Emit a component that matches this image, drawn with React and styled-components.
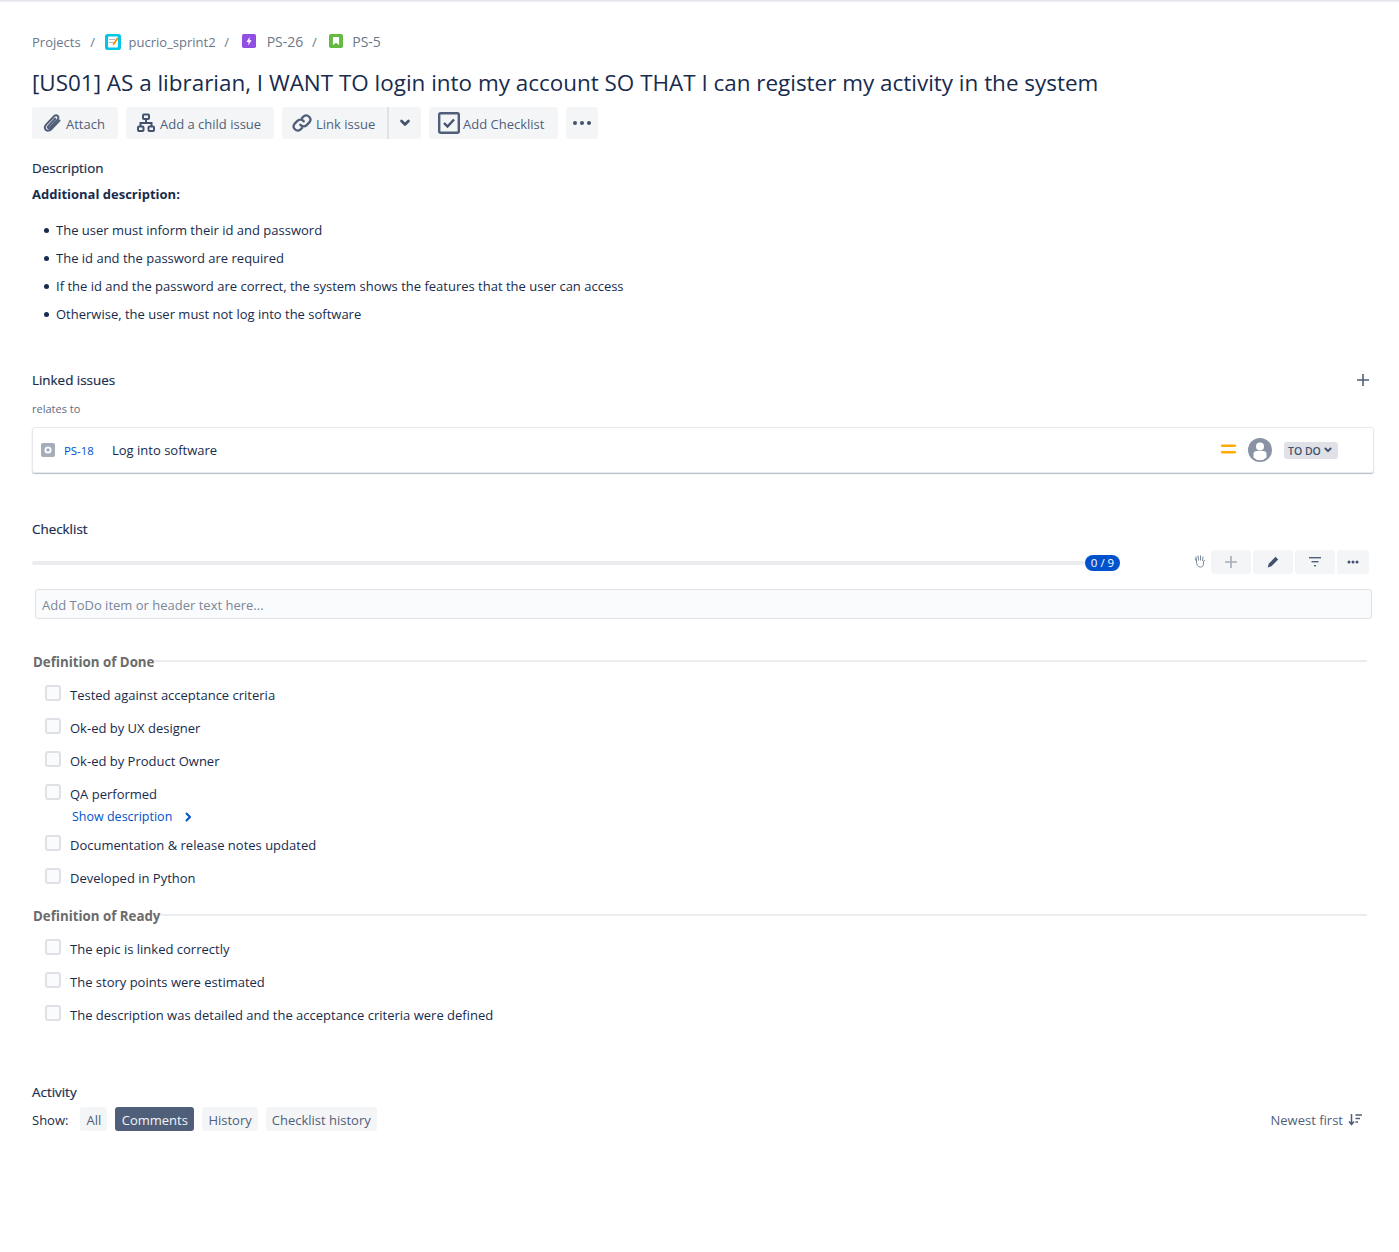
import React from "react";
import styled, { createGlobalStyle } from "styled-components";

const GlobalStyle = createGlobalStyle`
  html, body {
    margin: 0;
    padding: 0;
    background: #fff;
    color: #172b4d;
    font-family: "Open Sans", "Noto Sans", sans-serif;
    font-size: 13px;
  }
`;

const Page = styled.div`
  min-height: 1252px;
  box-sizing: border-box;
  padding: 31px 25px 0 32px;
  border-top: 1px solid #e4e6ec;
  box-shadow: inset 0 1px 1px #eef0f4;
`;

const Breadcrumbs = styled.nav`
  display: flex;
  align-items: center;
  height: 20px;
  color: #6b778c;
`;

const Crumb = styled.span`
  display: flex;
  align-items: center;
  gap: ${(p) => p.$gap || 8}px;
  padding-bottom: ${(p) => (p.$size ? 2 : 0)}px;
  font-size: ${(p) => p.$size || 13}px;
`;

const Slash = styled.span`
  width: 24px;
  text-align: center;
  margin: ${(p) => p.$margin || "0"};
`;

const Title = styled.h1`
  margin: 14px 0 0;
  height: 34px;
  line-height: 34px;
  font-size: 22.45px;
  font-weight: 400;
  color: #172b4d;
  white-space: nowrap;
`;

const Toolbar = styled.div`
  display: flex;
  gap: 8px;
  margin-top: 7px;
`;

const ToolButton = styled.button`
  display: flex;
  align-items: center;
  gap: ${(p) => p.$gap || 4}px;
  box-sizing: border-box;
  width: ${(p) => p.$width}px;
  height: 32px;
  padding: 0 0 0 ${(p) => p.$left || 10}px;
  border: 0;
  border-radius: 3px;
  background: #f4f5f7;
  color: #505f79;
  font: inherit;
`;

const ButtonLabel = styled.span`
  margin-top: 2px;
  white-space: nowrap;
`;

const SplitButton = styled.div`
  display: flex;
  height: 32px;
`;

const SplitMain = styled(ToolButton)`
  border-radius: 3px 0 0 3px;
  border-right: 2px solid #dfe1e6;
`;

const SplitCaret = styled(ToolButton)`
  border-radius: 0 3px 3px 0;
  padding: 0;
  justify-content: center;
`;

const SectionTitle = styled.h2`
  margin: ${(p) => p.$margin || "0"};
  height: 20px;
  line-height: 20px;
  font-size: 13.4px;
  font-weight: 500;
  -webkit-text-stroke: 0.2px #172b4d;
  color: #172b4d;
`;

const Strong = styled.p`
  margin: 6px 0 0;
  height: 20px;
  line-height: 20px;
  font-weight: 700;
`;

const Bullets = styled.ul`
  margin: 12px 0 0;
  padding: 0 0 0 12px;
  list-style: none;
  li {
    display: flex;
    align-items: center;
    height: 28px;
    line-height: 28px;
  }
  li::before {
    content: "";
    width: 5px;
    height: 5px;
    margin-right: 7px;
    border-radius: 50%;
    background: #172b4d;
  }
`;

const LinkedHead = styled.div`
  display: flex;
  justify-content: space-between;
  align-items: center;
  margin-top: 42px;
  padding-right: 5px;
`;

const SmallLabel = styled.div`
  margin-top: 11px;
  height: 16px;
  line-height: 16px;
  font-size: 11px;
  font-weight: 500;
  color: #5e6c84;
`;

const IssueCard = styled.div`
  display: flex;
  align-items: center;
  height: 46px;
  box-sizing: border-box;
  margin: 10px 0 0 0;
  padding: 0 35px 0 8px;
  border: 1px solid #e7e9ee;
  border-radius: 3px;
  box-shadow: 0 1px 1px rgba(9, 30, 66, 0.3);
`;

const IssueKey = styled.span`
  margin-left: 9px;
  width: 48px;
  font-size: 11.400px;
  color: #0052cc;
`;

const IssueSummary = styled.span`
  flex: 1;
`;

const Avatar = styled.svg`
  margin: 0 12px 0 11px;
`;

const StatusPill = styled.span`
  display: flex;
  align-items: center;
  gap: 1px;
  height: 17px;
  width: 54px;
  box-sizing: border-box;
  padding-left: 4px;
  border-radius: 3px;
  background: #dfe1e6;
  color: #42526e;
  font-size: 10.500px;
  font-weight: 600;
  white-space: nowrap;
`;

const PillLabel = styled.span`
  margin-top: 1px;
`;

const ProgressRow = styled.div`
  display: flex;
  align-items: center;
  height: 24px;
  margin-top: 11px;
  padding-right: 5px;
`;

const Track = styled.div`
  flex: 1;
  height: 4px;
  margin-top: 1px;
  background: #ebecf0;
  border-radius: 2px;
`;

const Count = styled.span`
  width: 35px;
  height: 16px;
  line-height: 16px;
  border-radius: 8px;
  background: #0052cc;
  color: #fff;
  font-size: 11.500px;
  text-align: center;
  margin-top: 2px;
`;

const Tools = styled.div`
  display: flex;
  align-items: center;
  gap: 2px;
  margin-left: 73px;
`;

const HandIcon = styled.svg`
  margin: -3px 2px 0 0;
`;

const SmallTool = styled.span`
  display: flex;
  align-items: center;
  justify-content: center;
  width: ${(p) => p.$width || 40}px;
  height: 24px;
  border-radius: 3px;
  background: #f4f5f7;
`;

const TodoInput = styled.input`
  display: block;
  box-sizing: border-box;
  width: 1337px;
  height: 30px;
  margin: 15px 0 0 3px;
  padding: 2px 6px 0;
  border: 1px solid #dfe1e6;
  border-radius: 3px;
  background: #fafbfc;
  font: inherit;
  &::placeholder {
    color: #7a869a;
    opacity: 1;
  }
`;

const GroupHeader = styled.div`
  display: flex;
  height: 20px;
  margin: ${(p) => p.$margin} 7px 0 1px;
  color: #6b6b6b;
  font-size: 13.300px;
  font-weight: 700;
  line-height: 20px;
  &::after {
    content: "";
    flex: 1;
    height: 2px;
    margin-top: 8px;
    background: #ebecf0;
  }
`;

const CheckList = styled.div`
  margin-top: 7px;
`;

const CheckRow = styled.label`
  display: flex;
  height: 33px;
  padding-left: 13px;
  line-height: 20px;
  gap: 9px;
  padding-top: 6px;
  box-sizing: border-box;
`;

const Box = styled.span`
  width: 12px;
  height: 12px;
  border: 2px solid #dfe1e6;
  border-radius: 3px;
  background: #fafbfc;
`;

const ShowDescription = styled.div`
  display: flex;
  align-items: center;
  gap: 12px;
  height: 18px;
  margin: -3px 0 0 40px;
  padding-bottom: 3px;
  color: #0052cc;
  font-size: 12.500px;
  line-height: 18px;
`;

const ActivityRow = styled.div`
  display: flex;
  align-items: center;
  height: 24px;
  margin-top: 5px;
  padding-right: 12px;
`;

const ShowLabel = styled.span`
  margin: 2px 12px 0 0;
`;

const Chip = styled.button`
  height: 24px;
  padding: 2px ${(p) => (p.$active ? 6.5 : 6)}px 0;
  margin-right: 8px;
  border: 0;
  border-radius: 3px;
  background: ${(p) => (p.$active ? "#505f79" : "#f4f5f7")};
  color: ${(p) => (p.$active ? "#f4f5f7" : "#505f79")};
  font: inherit;
`;

const Sort = styled.span`
  display: flex;
  align-items: center;
  gap: 5px;
  margin-left: auto;
  padding-top: 2px;
  color: #505f79;
`;

const ProjectIcon = () => (
  <svg width="16" height="16" viewBox="0 0 16 16">
    <rect width="16" height="16" rx="2.500" fill="#00c7e6" />
    <rect x="3" y="2.500" width="10" height="11" rx="1" fill="#fff" />
    <rect x="4" y="5" width="6" height="1" fill="#b3bac5" />
    <rect x="4" y="8" width="5" height="1" fill="#b3bac5" />
    <path d="M12 3.500l1.500 1-4 6-1.800.8.200-1.900z" fill="#ff8b00" />
  </svg>
);

const EpicIcon = () => (
  <svg width="14" height="14" viewBox="0 0 16 16">
    <rect width="16" height="16" rx="2" fill="#904ee2" />
    <path d="M9 3L5 9h2.600L7 13l4-6H8.400z" fill="#fff" />
  </svg>
);

const StoryIcon = () => (
  <svg width="14" height="14" viewBox="0 0 16 16">
    <rect width="16" height="16" rx="2" fill="#65ba43" />
    <path d="M5 3.500h6a.5.5 0 0 1 .5.5v8.500L8 10l-3.500 2.500V4a.5.5 0 0 1 .5-.5z" fill="#fff" />
  </svg>
);

const PaperclipIcon = () => (
  <svg width="20" height="20" viewBox="0 0 20 20" fill="none" stroke="#505f79" strokeWidth="2" strokeLinecap="round">
    <path d="M17.500 7.500l-8.300 8.700c-1.700 1.700-4 1.900-5.400.5s-1.100-3.600.5-5.300l7.800-8.200c1.100-1.100 2.600-1.200 3.600-.2s.9 2.500-.2 3.600l-7.700 8.100c-.5.500-1.200.6-1.700.1s-.3-1.200.2-1.700l6.900-7.300" />
  </svg>
);

const HierarchyIcon = () => (
  <svg width="20" height="20" viewBox="0 0 20 20" fill="none" stroke="#42526e" strokeWidth="2">
    <rect x="7" y="1.500" width="6" height="4.500" rx="1" />
    <rect x="2" y="13.500" width="5.500" height="4.500" rx="1" />
    <rect x="12.500" y="13.500" width="5.500" height="4.500" rx="1" />
    <path d="M10 6v4M4.500 13.500V10h11v3.500" />
  </svg>
);

const LinkIcon = () => (
  <svg width="20" height="20" viewBox="0 0 24 24" fill="none" stroke="#505f79" strokeWidth="2.800" strokeLinecap="round">
    <path d="M10 14a5 5 0 0 0 7.500.5l3.500-3.500a5 5 0 0 0-7-7l-2 2" />
    <path d="M14 10a5 5 0 0 0-7.500-.5L3 13a5 5 0 0 0 7 7l2-2" />
  </svg>
);

const ChevronDown = ({ size = 16, color = "#42526e" }) => (
  <svg width={size} height={size} viewBox="0 0 16 16" fill="none" stroke={color} strokeWidth="2.600" strokeLinecap="round" strokeLinejoin="round">
    <path d="M4.500 6l3.500 3.500L11.500 6" />
  </svg>
);

const CheckIcon = () => (
  <svg width="22" height="22" viewBox="0 0 22 22" fill="none">
    <rect x="1.200" y="1.200" width="19.600" height="19.600" rx="1.500" stroke="#505f79" strokeWidth="2.400" />
    <path d="M6 11l3.500 3.500L16 7.500" stroke="#42526e" strokeWidth="2.400" />
  </svg>
);

const Dots = ({ r = 2, gap = 7, color = "#42526e", width = 20 }) => (
  <svg width={width} height="8" viewBox={`0 0 ${width} 8`} fill={color}>
    <circle cx={width / 2 - gap} cy="4" r={r} />
    <circle cx={width / 2} cy="4" r={r} />
    <circle cx={width / 2 + gap} cy="4" r={r} />
  </svg>
);

const Plus = ({ color = "#505f79", size = 12 }) => (
  <svg width={size} height={size} viewBox="0 0 12 12" stroke={color} strokeWidth="1.600">
    <path d="M6 0v12M0 6h12" />
  </svg>
);

const App = () => {
  const done = [
    "Tested against acceptance criteria",
    "Ok-ed by UX designer",
    "Ok-ed by Product Owner",
    "QA performed",
  ];
  const doneRest = ["Documentation & release notes updated", "Developed in Python"];
  const ready = [
    "The epic is linked correctly",
    "The story points were estimated",
    "The description was detailed and the acceptance criteria were defined",
  ];

  return (
    <Page>
      <GlobalStyle />
      <Breadcrumbs>
        <Crumb>Projects</Crumb>
        <Slash>/</Slash>
        <Crumb>
          <ProjectIcon />
          pucrio_sprint2
        </Crumb>
        <Slash $margin="0 3px 0 -1px">/</Slash>
        <Crumb $gap={11} $size={14}>
          <EpicIcon />
          PS-26
        </Crumb>
        <Slash $margin="0 3px 0 -1px">/</Slash>
        <Crumb $gap={9} $size={14}>
          <StoryIcon />
          PS-5
        </Crumb>
      </Breadcrumbs>

      <Title>[US01] AS a librarian, I WANT TO login into my account SO THAT I can register my activity in the system</Title>

      <Toolbar>
        <ToolButton $width={86}>
          <PaperclipIcon />
          <ButtonLabel>Attach</ButtonLabel>
        </ToolButton>
        <ToolButton $width={148}>
          <HierarchyIcon />
          <ButtonLabel>Add a child issue</ButtonLabel>
        </ToolButton>
        <SplitButton>
          <SplitMain $width={107}>
            <LinkIcon />
            <ButtonLabel>Link issue</ButtonLabel>
          </SplitMain>
          <SplitCaret $width={32}>
            <ChevronDown />
          </SplitCaret>
        </SplitButton>
        <ToolButton $width={129} $gap={3} $left={9}>
          <CheckIcon />
          <ButtonLabel>Add Checklist</ButtonLabel>
        </ToolButton>
        <ToolButton $width={32} $left={6}>
          <Dots />
        </ToolButton>
      </Toolbar>

      <SectionTitle $margin="19px 0 0">Description</SectionTitle>
      <Strong>Additional description:</Strong>
      <Bullets>
        <li>The user must inform their id and password</li>
        <li>The id and the password are required</li>
        <li>If the id and the password are correct, the system shows the features that the user can access</li>
        <li>Otherwise, the user must not log into the software</li>
      </Bullets>

      <LinkedHead>
        <SectionTitle>Linked issues</SectionTitle>
        <Plus />
      </LinkedHead>
      <SmallLabel>relates to</SmallLabel>
      <IssueCard>
        <svg width="14" height="14" viewBox="0 0 14 14">
          <rect width="14" height="14" rx="2" fill="#a5adba" />
          <circle cx="7" cy="7" r="2.600" fill="none" stroke="#fff" strokeWidth="1.800" />
        </svg>
        <IssueKey>PS-18</IssueKey>
        <IssueSummary>Log into software</IssueSummary>
        <svg width="16" height="12" viewBox="0 0 16 12" fill="#ffab00">
          <rect y="0.500" width="15" height="2.600" rx="1" />
          <rect y="7" width="15" height="2.600" rx="1" />
        </svg>
        <Avatar width="24" height="24" viewBox="0 0 24 24">
          <circle cx="12" cy="12" r="12" fill="#8993a4" />
          <circle cx="12" cy="8.500" r="4" fill="#fff" />
          <path d="M5.500 16c0-2 1.500-3 3-3h7c1.500 0 3 1 3 3v3.500a9 9 0 0 1-13 0z" fill="#fff" />
        </Avatar>
        <StatusPill>
          <PillLabel>TO DO</PillLabel>
          <ChevronDown size={12} />
        </StatusPill>
      </IssueCard>

      <SectionTitle $margin="46px 0 0">Checklist</SectionTitle>
      <ProgressRow>
        <Track />
        <Count>0 / 9</Count>
        <Tools>
          <HandIcon width="14" height="14" viewBox="0 0 12 14" fill="none" stroke="#7a869a" strokeWidth="1">
            <path d="M2.500 7L1 4.500M2.500 7l-.5-4.500M4.500 6.500L4 1.500M6.500 6.500L6.500 1.500M8.500 7l.5-4.500M9 8l2-2M2.500 7c0 4 1 6 4 6s3-2 3-5" />
          </HandIcon>
          <SmallTool>
            <Plus color="#a5adba" />
          </SmallTool>
          <SmallTool>
            <svg width="12" height="12" viewBox="0 0 12 12" fill="#42526e">
              <path d="M8.500.8l2.700 2.700-6.800 6.800-3.700 1.200L1.700 7.800z" />
            </svg>
          </SmallTool>
          <SmallTool>
            <svg width="12" height="10" viewBox="0 0 12 10" fill="#505f79">
              <rect width="12" height="1.400" />
              <rect x="2.500" y="4" width="7" height="1.400" />
              <rect x="5" y="8" width="2" height="1.400" />
            </svg>
          </SmallTool>
          <SmallTool $width={32}>
            <Dots r={1.500} gap={4} width={14} />
          </SmallTool>
        </Tools>
      </ProgressRow>

      <TodoInput placeholder="Add ToDo item or header text here..." />

      <GroupHeader $margin="33px">Definition of Done</GroupHeader>
      <CheckList>
        {done.map((text) => (
          <CheckRow key={text}>
            <Box />
            {text}
          </CheckRow>
        ))}
        <ShowDescription>
          Show description
          <svg width="8" height="10" viewBox="0 0 8 10" fill="none" stroke="#0052cc" strokeWidth="2" strokeLinecap="round" strokeLinejoin="round">
            <path d="M2.500 1.500L6 5 2.500 8.500" />
          </svg>
        </ShowDescription>
        {doneRest.map((text) => (
          <CheckRow key={text}>
            <Box />
            {text}
          </CheckRow>
        ))}
      </CheckList>

      <GroupHeader $margin="11px">Definition of Ready</GroupHeader>
      <CheckList>
        {ready.map((text) => (
          <CheckRow key={text}>
            <Box />
            {text}
          </CheckRow>
        ))}
      </CheckList>

      <SectionTitle $margin="50px 0 0">Activity</SectionTitle>
      <ActivityRow>
        <ShowLabel>Show:</ShowLabel>
        <Chip>All</Chip>
        <Chip $active>Comments</Chip>
        <Chip>History</Chip>
        <Chip>Checklist history</Chip>
        <Sort>
          Newest first
          <svg width="14" height="12" viewBox="0 0 14 12" fill="none" stroke="#505f79" strokeWidth="1.500">
            <path d="M3.500 0v10M1 7.500l2.500 3 2.500-3M7.500 1H14M7.500 4.500H12M7.500 8h2.500" />
          </svg>
        </Sort>
      </ActivityRow>
    </Page>
  );
};

export default App;
